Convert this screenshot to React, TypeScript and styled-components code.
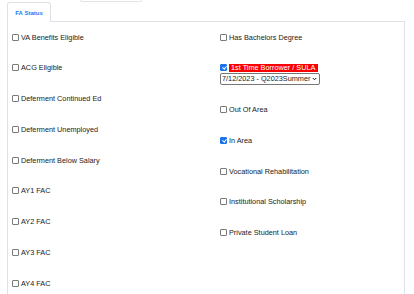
import React from "react";
import styled, { createGlobalStyle } from "styled-components";

const Global = createGlobalStyle`
  html, body { margin: 0; padding: 0; background: #fff; }
  body { font-family: "Liberation Sans", Arial, sans-serif; color: #222; overflow: hidden; }
`;

const Page = styled.div`
  width: 414px;
  height: 294px;
  overflow: hidden;
`;

const TopStub = styled.div`
  margin-left: 80px;
  width: 60px;
  height: 1px;
  border: 1px solid #e4e4e4;
  border-top: none;
  border-radius: 0 0 2px 2px;
`;

const TabBar = styled.div`
  display: flex;
  padding-left: 7px;
  margin-right: 9px;
`;

const Tab = styled.div`
  width: 42px;
  height: 19px;
  border: 1px solid #dee2e6;
  border-bottom: none;
  border-radius: 3px 3px 0 0;
  display: flex;
  align-items: center;
  justify-content: center;
  font-size: 6px;
  font-weight: bold;
  color: #1a7cf5;
  background: #fff;
  position: relative;
  z-index: 1;
`;

const Panel = styled.div`
  margin: -1px 9px 0 7px;
  border: 1px solid #dee2e6;
  border-bottom: none;
  height: 300px;
  display: grid;
  grid-template-columns: 208px 1fr;
  padding: 10.5px 4px 0 4px;
`;

const Column = styled.div`
  display: flex;
  flex-direction: column;
  align-items: flex-start;
`;

const Item = styled.div`
  font-size: 7.3px;
  line-height: 9px;
  margin-bottom: 21.8px;
`;

const Label = styled.label`
  display: flex;
  align-items: center;
  height: 9px;
  white-space: nowrap;
  color: #222;
`;

const Box = styled.input`
  appearance: none;
  -webkit-appearance: none;
  box-sizing: border-box;
  width: 7px;
  height: 7px;
  margin: 0 2px 0 0;
  flex: none;
  border: 1px solid #7a7a7a;
  border-radius: 1px;
  background: #fff;
  position: relative;
  &:checked {
    background: #1a73e8;
    border-color: #1a73e8;
  }
  &:checked::after {
    content: "";
    position: absolute;
    left: 1.5px;
    top: 0px;
    width: 1.5px;
    height: 3.2px;
    border: solid #fff;
    border-width: 0 1px 1px 0;
    transform: rotate(40deg);
  }
`;

const Flag = styled.span`
  background: #ff0000;
  color: #fff;
  padding: 0 3px 0 2px;
  height: 8px;
  line-height: 8px;
`;

const SelectWrap = styled.div`
  position: relative;
  width: 100px;
  margin: 1px 0 -2px;
`;

const Select = styled.select`
  appearance: none;
  -webkit-appearance: none;
  display: block;
  box-sizing: border-box;
  width: 100px;
  height: 12px;
  font-family: "Liberation Sans", Arial, sans-serif;
  font-size: 7.3px;
  line-height: 10px;
  color: #222;
  border: 1px solid #767676;
  border-radius: 2px;
  padding: 0 0 0 1px;
  background: #fff;
  outline: none;
`;

const Chevron = styled.svg`
  position: absolute;
  right: 3px;
  top: 4px;
  width: 5px;
  height: 4px;
  pointer-events: none;
`;

type Entry = { label: string; checked?: boolean; flag?: boolean; select?: string };

const left: Entry[] = [
  { label: "VA Benefits Eligible" },
  { label: "ACG Eligible" },
  { label: "Deferment Continued Ed" },
  { label: "Deferment Unemployed" },
  { label: "Deferment Below Salary" },
  { label: "AY1 FAC" },
  { label: "AY2 FAC" },
  { label: "AY3 FAC" },
  { label: "AY4 FAC" },
];

const right: Entry[] = [
  { label: "Has Bachelors Degree" },
  { label: "1st Time Borrower / SULA", checked: true, flag: true, select: "7/12/2023 - Q2023Summer" },
  { label: "Out Of Area" },
  { label: "In Area", checked: true },
  { label: "Vocational Rehabilitation" },
  { label: "Institutional Scholarship" },
  { label: "Private Student Loan" },
];

function Row({ e }: { e: Entry }) {
  return (
    <Item>
      <Label>
        <Box type="checkbox" defaultChecked={e.checked} />
        {e.flag ? <Flag>{e.label}</Flag> : e.label}
      </Label>
      {e.select && (
        <SelectWrap>
          <Select defaultValue={e.select}>
            <option>{e.select}</option>
          </Select>
          <Chevron viewBox="0 0 10 8">
            <path d="M1.5 2 L5 5.5 L8.5 2" fill="none" stroke="#111" strokeWidth="2" />
          </Chevron>
        </SelectWrap>
      )}
    </Item>
  );
}

export default function App() {
  return (
    <Page>
      <Global />
      <TopStub />
      <TabBar>
        <Tab>FA Status</Tab>
      </TabBar>
      <Panel>
        <Column>
          {left.map((e) => (
            <Row key={e.label} e={e} />
          ))}
        </Column>
        <Column>
          {right.map((e) => (
            <Row key={e.label} e={e} />
          ))}
        </Column>
      </Panel>
    </Page>
  );
}
